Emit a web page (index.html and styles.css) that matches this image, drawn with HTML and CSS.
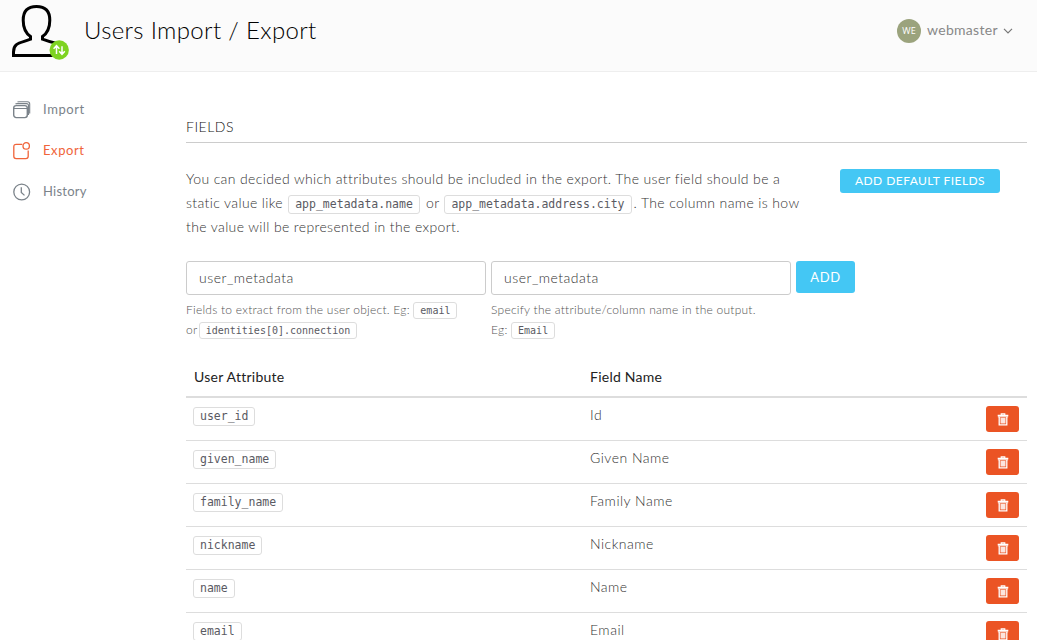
FILE: index.html
```html
<!DOCTYPE html>
<html lang="en">
<head>
<meta charset="utf-8">
<title>Users Import / Export</title>
<link rel="stylesheet" href="styles.css">
</head>
<body>
<svg class="sprite" aria-hidden="true">
  <symbol id="trash" viewBox="0 0 12 13">
    <path d="M4.2 2V.9h3.600V2M.7 2.400h10.600M.8 3.700h10.400" fill="none" stroke="#fff" stroke-width="1.100"/>
    <path d="M2.200 4v7.900h7.600V4" fill="none" stroke="#fff" stroke-width="1.300"/>
    <path d="M3.500 4.800h5v5.700h-5z" fill="#fff" opacity=".85"/>
  </symbol>
</svg>
<header class="header">
  <div class="logo">
    <svg width="60" height="60" viewBox="0 0 60 60">
      <path d="M32.500 39.200V36.500C37.500 33 39.800 28 39.800 20.200C39.800 11 35.500 6.500 26.500 6.500C17.500 6.500 13.200 11 13.200 20.200C13.200 28 15.500 33 20.500 36.500V39.200C11 43 3.500 42.200 3.500 52V55.500H47V43.500Q41 42.500 32.500 39.200Z" fill="none" stroke="#000" stroke-width="3"/>
      <circle cx="49.200" cy="50" r="9.700" fill="#7ed321"/>
      <path d="M46.500 54V46M43.600 48.700l2.900-3 2.900 3M52 46.200V54M49.200 51.300l2.800 3 2.800-3" fill="none" stroke="#fff" stroke-width="1.500"/>
    </svg>
  </div>
  <h1 class="title">Users Import / Export</h1>
  <div class="account">
    <span class="avatar">WE</span>
    <span class="account-name">webmaster</span>
    <svg width="10" height="6" viewBox="0 0 10 6"><path d="M1 .8l4 4 4-4" fill="none" stroke="#777" stroke-width="1.200"/></svg>
  </div>
</header>
<div class="layout">
  <nav class="sidebar">
    <a class="nav-item"><svg width="18" height="18" viewBox="0 0 18 18" fill="none" stroke="currentColor"><rect x=".7" y="4.600" width="13.600" height="12" rx="2.500" stroke-width="1.400"/><path d="M1 7.500h13M2.500 3Q3 2.600 4 2.600h9.500q2 0 2 2V14M4.500 1Q5 .7 6 .7h8.500q2.200 0 2.200 2.200V12.500" stroke-width="1.100"/></svg><span class="nav-import">Import</span></a>
    <a class="nav-item active"><svg width="18" height="18" viewBox="0 0 18 18" fill="none" stroke="currentColor" stroke-width="1.300"><path d="M9.300 2.300H3.200Q.8 2.300.8 4.700v9.500q0 2.400 2.400 2.400h9.600q2.400 0 2.400-2.400V8.500"/><circle cx="13.200" cy="3.900" r="3.200"/></svg><span class="nav-export">Export</span></a>
    <a class="nav-item"><svg width="18" height="18" viewBox="0 0 18 18" fill="none" stroke="currentColor" stroke-width="1.300"><circle cx="8.700" cy="9" r="7.900"/><path d="M8.300 4.200v5.200l3.200 3"/></svg><span class="nav-history">History</span></a>
  </nav>
  <main class="main">
    <h2 class="section-title">FIELDS</h2>
    <div class="intro">
      <p class="intro-text"><span class="line-one">You can decided which attributes should be included in the export. The user field should be a</span><br><span class="line-two">static value like <code>app_metadata.name</code> or <code>app_metadata.address.city</code>. The column name is how</span><br><span class="line-three">the value will be represented in the export.</span></p>
      <button class="btn btn-default-fields">ADD DEFAULT FIELDS</button>
    </div>
    <form class="form">
      <div class="field">
        <input class="input" type="text" value="user_metadata">
        <p class="help">Fields to extract from the user object. Eg: <code>email</code><br>or <code class="tight">identities[0].connection</code></p>
      </div>
      <div class="field">
        <input class="input" type="text" value="user_metadata">
        <p class="help">Specify the attribute/column name in the output.<br>Eg: <code>Email</code></p>
      </div>
      <button class="btn btn-add" type="button">ADD</button>
    </form>
    <div class="table">
      <div class="row head"><span>User Attribute</span><span>Field Name</span></div>
      <div class="row"><span><code>user_id</code></span><span>Id</span><button class="delete"><svg width="12" height="13"><use href="#trash"/></svg></button></div>
      <div class="row"><span><code>given_name</code></span><span>Given Name</span><button class="delete"><svg width="12" height="13"><use href="#trash"/></svg></button></div>
      <div class="row"><span><code>family_name</code></span><span>Family Name</span><button class="delete"><svg width="12" height="13"><use href="#trash"/></svg></button></div>
      <div class="row"><span><code>nickname</code></span><span>Nickname</span><button class="delete"><svg width="12" height="13"><use href="#trash"/></svg></button></div>
      <div class="row"><span><code>name</code></span><span>Name</span><button class="delete"><svg width="12" height="13"><use href="#trash"/></svg></button></div>
      <div class="row"><span><code>email</code></span><span>Email</span><button class="delete"><svg width="12" height="13"><use href="#trash"/></svg></button></div>
    </div>
  </main>
</div>
</body>
</html>
```
FILE: styles.css
```css
* { box-sizing: border-box; }
html, body { height: 100%; overflow: hidden; }
body { margin: 0; background: #fff; color: #333; font: 300 14px/24px Lato, "Liberation Sans", sans-serif; }
h1, h2, p { margin: 0; font-weight: inherit; }
svg { display: block; flex: none; }
button { border: 0; font-family: inherit; }
.sprite { display: none; }
.header { display: flex; height: 72px; background: #fbfbfb; border-bottom: 1px solid #eee; }
.logo { width: 84px; padding-left: 10px; }
.title { color: #000; font-size: 24px; line-height: 59px; letter-spacing: .35px; white-space: nowrap; }
.account { display: flex; align-items: center; height: 61px; margin-left: auto; padding-right: 24px; color: #888; }
.avatar { width: 24px; height: 24px; margin-right: 6px; border-radius: 50%; background: #9ba37d; color: #fff; font: 9px/24px "Open Sans", sans-serif; text-align: center; }
.account-name { width: 71px; margin: -2px 5px 0 0; font-weight: 400; letter-spacing: .3px; }
.layout { display: flex; }
.sidebar { width: 186px; padding: 17px 0 0 13px; }
.nav-item { display: flex; align-items: center; height: 41px; gap: 12px; color: #7b838a; font-size: 13px; font-weight: 400; letter-spacing: .6px; }
.nav-item span { margin-top: -1px; }
.nav-history { letter-spacing: .25px; }
.active { color: #f0643a; }
.main { width: 841px; padding-top: 43px; }
.section-title { height: 28px; border-bottom: 1px solid #ccc; color: #111; font-size: 14px; line-height: 24px; letter-spacing: .5px; }
.intro { display: flex; justify-content: space-between; padding: 24px 27px 0 0; height: 118px; }
.intro-text { white-space: nowrap; letter-spacing: .37px; }
.intro-text code { margin: 0 2px 0 1px; }
code { display: inline-block; height: 19px; padding: 0 6px; border: 1px solid #ddd; border-radius: 3px; background: #fff; color: #5a5a62; font: 400 11.5px/17px "DejaVu Sans Mono", monospace; letter-spacing: 0; }
.btn { border-radius: 3px; background: #44c7f4; color: #fff; font-weight: 400; letter-spacing: 1px; padding: 0; }
.btn-default-fields { width: 160px; height: 24px; margin-top: 2px; padding-bottom: 1px; font-size: 12px; line-height: 23px; letter-spacing: .45px; }
.form { display: flex; gap: 5px; height: 103px; }
.field { width: 300px; }
.input { display: block; width: 300px; height: 34px; padding: 0 12px 1px; border: 1px solid #ccc; border-radius: 3px; color: #333; font: inherit; letter-spacing: .5px; }
.help { margin-top: 5px; color: #555; font-size: 12px; line-height: 20px; letter-spacing: .25px; white-space: nowrap; }
.help code { height: 17px; font-size: 10px; line-height: 15px; }
.help .tight { margin-left: -2px; }
.btn-add { width: 59px; height: 32px; font-size: 13px; letter-spacing: .6px; }
.row { display: grid; grid-template-columns: 396px 396px 1fr; height: 43px; padding: 8px 0 0 8px; border-bottom: 1px solid #ddd; line-height: 20px; letter-spacing: .5px; }
.row span { margin-top: -1px; }
.row code { margin-left: -1px; }
.head { height: 34px; padding-top: 4px; border-bottom-width: 2px; color: #222; font-weight: 400; letter-spacing: .25px; }
.delete { display: grid; place-items: center; width: 33px; height: 26px; padding: 0; border-radius: 3px; background: #eb5424; }
```
